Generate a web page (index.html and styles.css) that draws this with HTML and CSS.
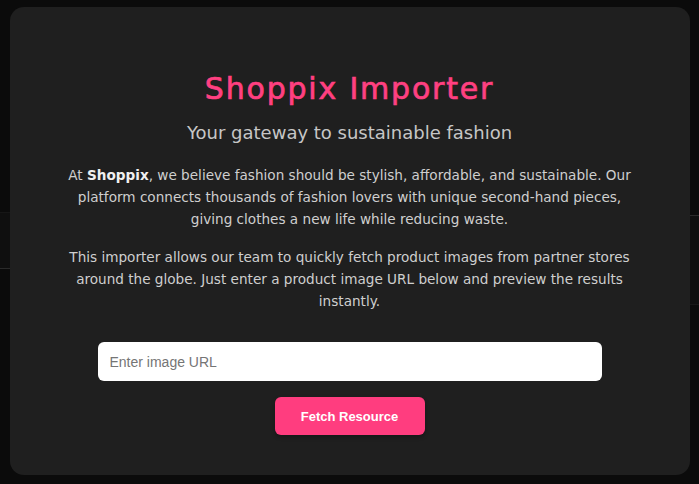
FILE: index.html
```html
<!DOCTYPE html>
<html lang="en">
<head>
<meta charset="UTF-8">
<meta name="viewport" content="width=device-width, initial-scale=1.0">
<title>Shoppix Importer</title>
<link rel="stylesheet" href="styles.css">
</head>
<body>

<div class="page">
    <div class="page-row">
        <div class="panel panel-left"></div>
        <div class="panel panel-right"></div>
    </div>
</div>

<div class="overlay">
    <div class="modal">
        <h1 class="title">Shoppix Importer</h1>
        <p class="subtitle">Your gateway to sustainable fashion</p>
        <p class="text">At <strong>Shoppix</strong>, we believe fashion should be stylish, affordable, and sustainable. Our platform connects thousands of fashion lovers with unique second-hand pieces, giving clothes a new life while reducing waste.</p>
        <p class="text">This importer allows our team to quickly fetch product images from partner stores around the globe. Just enter a product image URL below and preview the results instantly.</p>
        <form class="fetch-form" onsubmit="return false">
            <input type="text" id="url" placeholder="Enter image URL">
            <button type="submit">Fetch Resource</button>
        </form>
    </div>
</div>

</body>
</html>
```

FILE: styles.css
```css
body {
    font-family: "DejaVu Sans", Arial, sans-serif;
    margin: 0;
    padding: 0;
    background-color: #0b0b0b;
    height: 484px;
    overflow: hidden;
}

.page {
    padding-top: 212px;
}
.page-row {
    display: flex;
    justify-content: space-between;
}
.panel {
    width: 40px;
    background-color: #0f0f0f;
}
.panel-left {
    height: 55px;
    border-top: 1px solid #161616;
    border-bottom: 1px solid #2a2a2a;
}
.panel-right {
    margin-top: 3px;
    height: 88px;
    border-top: 1px solid #2a2a2a;
    border-bottom: 1px solid #181818;
}

.overlay {
    position: fixed;
    inset: 0;
    display: flex;
    justify-content: center;
    padding-top: 7px;
}
.modal {
    box-sizing: border-box;
    width: 680px;
    height: 468px;
    padding: 64px 50px 0;
    background-color: #1f1f1f;
    border-radius: 14px;
    text-align: center;
}

.title {
    margin: 0;
    font-size: 30px;
    line-height: 36px;
    font-weight: normal;
    letter-spacing: 1.8px;
    color: #ff4081;
    -webkit-text-stroke: 0.7px #ff4081;
}
.subtitle {
    margin: 13px 0 18px;
    font-size: 18px;
    line-height: 26px;
    font-weight: normal;
    color: #c6c6c6;
}
.text {
    margin: 0 0 16px;
    font-size: 13.6px;
    line-height: 22px;
    color: #cfcfcf;
}
.text strong {
    color: #f0f0f0;
}

.fetch-form {
    display: flex;
    flex-direction: column;
    align-items: center;
    margin-top: 30px;
}
.fetch-form input {
    box-sizing: border-box;
    width: 504px;
    height: 39px;
    padding: 0 12px;
    border: none;
    border-radius: 6px;
    background-color: #fff;
    font-family: "Liberation Sans", Arial, sans-serif;
    font-size: 14px;
}
.fetch-form input::placeholder {
    color: #757575;
}
.fetch-form button {
    margin-top: 16px;
    width: 150px;
    height: 38px;
    border: none;
    border-radius: 6px;
    background-color: #ff3d7f;
    color: #fff;
    font-family: "Liberation Sans", Arial, sans-serif;
    font-weight: bold;
    font-size: 13px;
    cursor: pointer;
    box-shadow: 0 2px 4px rgba(0, 0, 0, 0.3);
}
.fetch-form button:hover {
    background-color: #e6336f;
}
```
